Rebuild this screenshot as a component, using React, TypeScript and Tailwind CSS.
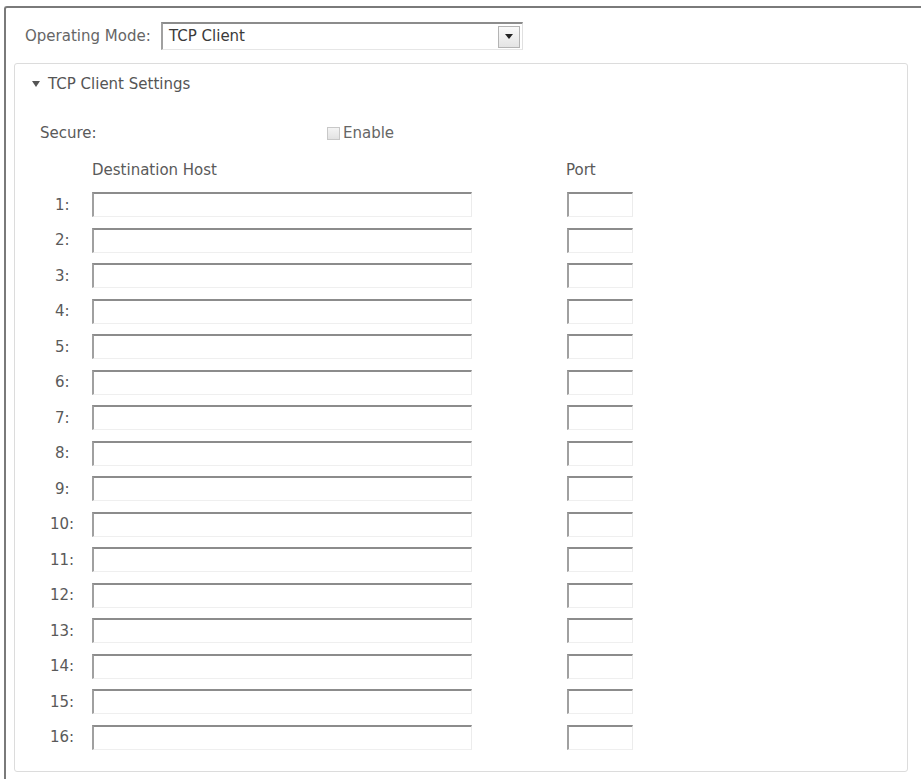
import React from 'react'

const rows = Array.from({ length: 16 }, (_, i) => i + 1)

const inputCls =
  'h-[25px] border-t-2 border-l-2 border-r border-b border-t-[#8c8c8c] border-l-[#a0a0a0] border-r-[#ececec] border-b-[#efefef] bg-white'

const App: React.FC = () => {
  return (
    <div className="min-h-[779px] bg-white pt-[6px] pl-[4px] font-['DejaVu_Sans',sans-serif] text-[15px] text-[#5a5a5a]">
      <div className="h-[773px] rounded-tl-[3px] border-l-2 border-t-2 border-[#7a7a7a] pt-[14px]">
        <div className="flex items-center pl-[19px]">
          <span className="w-[136px] text-[#666]">Operating Mode:</span>
          <div className="flex h-[28px] w-[362px] items-center justify-between border-t-2 border-l-2 border-r border-b border-t-[#8c8c8c] border-l-[#a0a0a0] border-r-[#e0e0e0] border-b-[#e6e6e6] pl-[6px] pr-[2px]">
            <span className="text-[#3a3a3a]">TCP Client</span>
            <span className="flex h-[22px] w-[22px] items-center justify-center border border-[#b4b4b4] bg-gradient-to-b from-[#fafafa] to-[#e4e4e4]">
              <svg width="8" height="5" viewBox="0 0 8 5">
                <path d="M0 0h8L4 5z" fill="#222" />
              </svg>
            </span>
          </div>
        </div>

        <div className="ml-[8px] mt-[13px] h-[709px] w-[894px] rounded-[3px] border border-[#dcdcdc] pt-[10px]">
          <div className="flex h-[20px] items-center pl-[17px] text-[#555]">
            <svg width="8" height="6" viewBox="0 0 8 6" className="mr-[8px]">
              <path d="M0 0h8L4 6z" fill="#555" />
            </svg>
            <span>TCP Client Settings</span>
          </div>

          <div className="mt-[29px] flex h-[20px] items-center pl-[25px]">
            <span className="w-[287px]">Secure:</span>
            <span className="h-[13px] w-[13px] border border-[#c8c8c8] bg-gradient-to-b from-[#f4f4f4] to-[#e2e2e2]" />
            <span className="ml-[3px] text-[#666]">Enable</span>
          </div>

          <div className="mt-[17px] flex h-[20px] items-center pl-[77px]">
            <span className="w-[474px]">Destination Host</span>
            <span>Port</span>
          </div>

          <div className="mt-[7px] pl-[33px]">
            {rows.map((n) => (
              <div key={n} className="flex h-[35.5px] items-center">
                <span className={`w-[44px] ${n < 10 ? 'pl-[7px]' : 'pl-[2px]'}`}>{n}:</span>
                <div className={`w-[380px] ${inputCls}`} />
                <div className={`ml-[95px] w-[66px] ${inputCls}`} />
              </div>
            ))}
          </div>
        </div>
      </div>
    </div>
  )
}

export default App
